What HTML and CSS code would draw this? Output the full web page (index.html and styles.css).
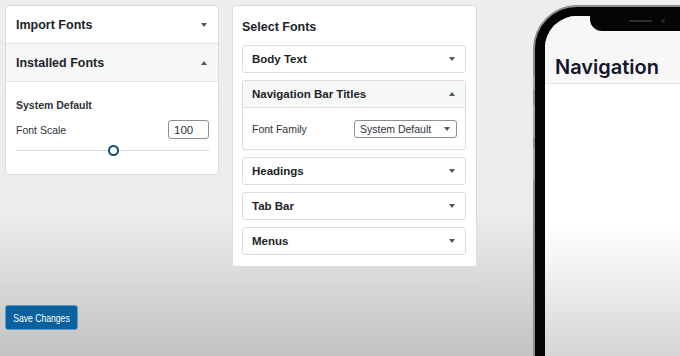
FILE: index.html
```html
<!DOCTYPE html>
<html lang="en">
<head>
    <meta charset="UTF-8">
    <meta name="viewport" content="width=device-width, initial-scale=1.0">
    <title>Fonts</title>
    <link rel="stylesheet" href="styles.css">
</head>
<body>
    <div class="page">
        <div class="settings">
            <div class="columns">
                <!-- left column: font sources -->
                <div class="panel side">
                    <div class="acc-head">
                        <span>Import Fonts</span>
                        <i class="caret"></i>
                    </div>
                    <div class="acc-head open">
                        <span>Installed Fonts</span>
                        <i class="caret up"></i>
                    </div>
                    <div class="acc-body">
                        <p class="label strong">System Default</p>
                        <div class="row">
                            <span class="label">Font Scale</span>
                            <input class="num" type="text" value="100">
                        </div>
                        <div class="slider">
                            <div class="track"></div>
                            <div class="thumb"></div>
                        </div>
                    </div>
                </div>

                <!-- middle column: per-area fonts -->
                <div class="panel select">
                    <h2>Select Fonts</h2>
                    <div class="item">
                        <div class="item-head"><span>Body Text</span><i class="caret"></i></div>
                    </div>
                    <div class="item">
                        <div class="item-head open"><span>Navigation Bar Titles</span><i class="caret up"></i></div>
                        <div class="item-body">
                            <span class="label">Font Family</span>
                            <div class="dropdown"><span>System Default</span><i class="caret"></i></div>
                        </div>
                    </div>
                    <div class="item">
                        <div class="item-head"><span>Headings</span><i class="caret"></i></div>
                    </div>
                    <div class="item">
                        <div class="item-head"><span>Tab Bar</span><i class="caret"></i></div>
                    </div>
                    <div class="item">
                        <div class="item-head"><span>Menus</span><i class="caret"></i></div>
                    </div>
                </div>
            </div>
            <hr class="sep">
            <button class="save"><span>Save Changes</span></button>
        </div>

        <!-- app preview -->
        <div class="preview">
            <div class="phone">
                <span class="btn b1"></span>
                <span class="btn b2"></span>
                <span class="btn b3"></span>
                <div class="screen">
                    <div class="notch"><span class="speaker"></span><span class="cam"></span></div>
                    <div class="nav-bar">Navigation</div>
                    <div class="content"></div>
                </div>
            </div>
        </div>
    </div>
</body>
</html>
```

FILE: styles.css
```css
html, body {
    margin: 0;
    height: 356px;
    overflow: hidden;
}

body {
    background: linear-gradient(to bottom, #eeeeee 0%, #ececec 60%, #c3c3c3 100%);
    font-family: "Liberation Sans", Arial, sans-serif;
    color: #1d2327;
}

.page {
    display: flex;
    height: 356px;
    box-sizing: border-box;
    padding: 5px 0 0 5px;
}

.settings {
    width: 472px;
    flex: none;
}

.columns {
    display: flex;
    align-items: flex-start;
    gap: 13px;
}

.panel {
    background: #fff;
    border: 1px solid #dcdcde;
    border-radius: 3px;
    box-sizing: border-box;
}

/* left column */
.side {
    width: 214px;
    height: 170px;
}

.acc-head {
    display: flex;
    justify-content: space-between;
    align-items: center;
    height: 37px;
    padding: 0 11px 0 10px;
    border-bottom: 1px solid #e2e4e7;
    font-size: 12.5px;
    font-weight: bold;
}

.acc-head.open {
    background: #f6f7f7;
}

.caret {
    width: 0;
    height: 0;
    border-left: 3px solid transparent;
    border-right: 3px solid transparent;
    border-top: 4px solid #50575e;
}

.caret.up {
    border-top: none;
    border-bottom: 4px solid #50575e;
}

.acc-body {
    padding: 17px 9px 0 10px;
}

.label {
    font-size: 10.5px;
    color: #2c3338;
}

.label.strong {
    margin: 0 0 9px;
    font-weight: bold;
}

.row {
    display: flex;
    justify-content: space-between;
    align-items: center;
}

.num {
    width: 41px;
    height: 19px;
    box-sizing: border-box;
    border: 1px solid #8c8f94;
    border-radius: 3px;
    padding: 0 0 0 5px;
    font-family: inherit;
    font-size: 11.5px;
    color: #2c3338;
}

.slider {
    position: relative;
    height: 12px;
    margin-top: 5px;
}

.track {
    position: absolute;
    left: 0;
    right: 0;
    top: 6px;
    height: 1px;
    background: #d9d9d9;
}

.thumb {
    position: absolute;
    left: 92px;
    top: 1px;
    width: 7px;
    height: 7px;
    border: 2px solid #0b4d78;
    border-radius: 50%;
    background: #fff;
}

/* middle column */
.select {
    width: 245px;
    height: 262px;
    padding: 0 10px 0 9px;
}

.select h2 {
    margin: 14px 0 11px;
    font-size: 12.5px;
    font-weight: bold;
}

.item {
    border: 1px solid #dcdcde;
    border-radius: 3px;
    margin-bottom: 7px;
    background: #fff;
}

.item-head {
    display: flex;
    justify-content: space-between;
    align-items: center;
    height: 26px;
    padding: 0 10px 0 9px;
    font-size: 11.5px;
    font-weight: bold;
}

.item-head.open {
    background: #f6f7f7;
    border-bottom: 1px solid #e2e4e7;
}

.item-body {
    display: flex;
    justify-content: space-between;
    align-items: center;
    height: 41px;
    padding: 0 8px 0 9px;
}

.dropdown {
    display: flex;
    justify-content: space-between;
    align-items: center;
    width: 103px;
    height: 18px;
    box-sizing: border-box;
    border: 1px solid #8c8f94;
    border-radius: 3px;
    padding: 0 6px 0 5px;
    font-size: 10.5px;
    color: #2c3338;
}

.sep {
    margin: 20px 0 0;
    border: none;
    height: 2px;
    background: #d2d2d2;
}

.save {
    display: block;
    margin-top: 16px;
    width: 73px;
    height: 25px;
    padding: 0;
    background: #0b619e;
    border: 1px solid #5d9bc7;
    border-radius: 3px;
    color: #fff;
    font-family: inherit;
    font-size: 10.5px;
    white-space: nowrap;
}

.save span {
    display: inline-block;
    transform: scaleX(0.82);
}

/* phone preview */
.preview {
    flex: 1;
    height: 351px;
    overflow: hidden;
}

.phone {
    position: relative;
    margin-left: 56px;
    width: 200px;
    height: 400px;
    padding: 9px 10px;
    background: #050505;
    border: 2px solid #8d8d8d;
    border-radius: 44px;
}

.btn {
    position: absolute;
    left: -2px;
    width: 2px;
    background: #a5a5a5;
    border-radius: 1px;
}

.b1 { top: 68px; height: 15px; }
.b2 { top: 98px; height: 33px; }
.b3 { top: 141px; height: 33px; }

.screen {
    position: relative;
    height: 100%;
    border-radius: 32px;
    overflow: hidden;
    background: #fff;
}

.notch {
    position: absolute;
    top: 0;
    left: 45px;
    right: -20px;
    height: 15px;
    background: #050505;
    border-bottom-left-radius: 12px;
}

.speaker {
    position: absolute;
    left: 39px;
    top: 4px;
    width: 23px;
    height: 2px;
    border-radius: 1px;
    background: #2e2e2e;
}

.cam {
    position: absolute;
    left: 71px;
    top: 3px;
    width: 4px;
    height: 4px;
    border-radius: 50%;
    background: #1f2530;
}

.nav-bar {
    display: flex;
    align-items: flex-end;
    height: 63px;
    padding: 0 0 4px 10px;
    background: #f7f7f7;
    border-bottom: 1px solid #e3e3e3;
    font-family: Inter, "Noto Sans", sans-serif;
    font-size: 20px;
    font-weight: 600;
    color: #14142b;
}

.content {
    height: 300px;
    background: linear-gradient(to bottom, #ffffff 0%, #ffffff 48%, #d4d4d4 92%);
}
```
